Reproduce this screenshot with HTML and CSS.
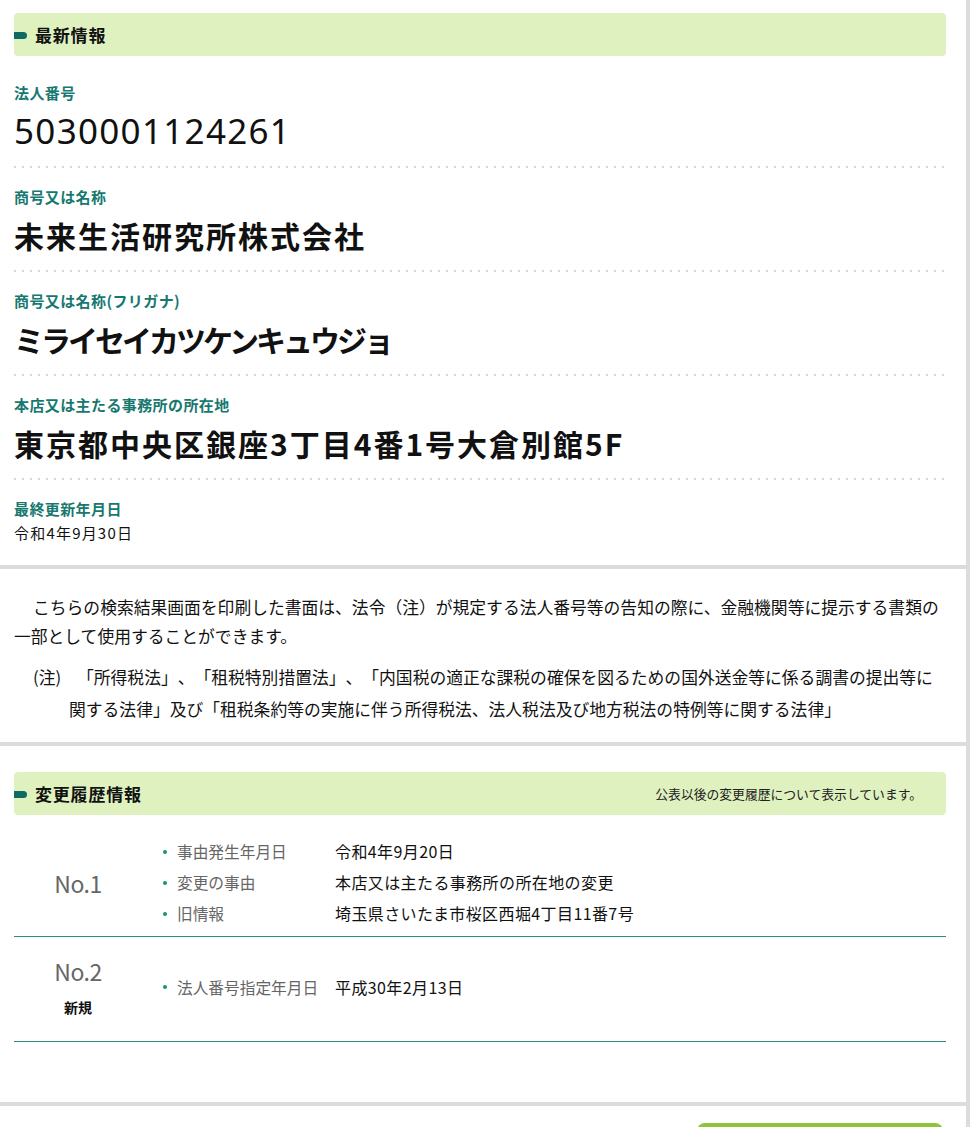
FILE: index.html
```html
<!DOCTYPE html>
<html lang="ja">
<head>
<meta charset="utf-8">
<title>法人番号公表サイト</title>
<link rel="stylesheet" href="styles.css">
</head>
<body>
<div class="page">
  <section class="panel latest">
    <h2 class="bar"><span class="bar-title">最新情報</span></h2>
    <dl class="fields">
      <div class="field">
        <dt>法人番号</dt>
        <dd class="num">5030001124261</dd>
      </div>
      <div class="field">
        <dt>商号又は名称</dt>
        <dd class="big">未来生活研究所株式会社</dd>
      </div>
      <div class="field">
        <dt>商号又は名称(フリガナ)</dt>
        <dd class="big kana">ミライセイカツケンキュウジョ</dd>
      </div>
      <div class="field">
        <dt>本店又は主たる事務所の所在地</dt>
        <dd class="big addr">東京都中央区銀座3丁目4番1号大倉別館5F</dd>
      </div>
      <div class="field last">
        <dt>最終更新年月日</dt>
        <dd class="small">令和4年9月30日</dd>
      </div>
    </dl>
  </section>

  <section class="panel notice">
    <p class="lead">こちらの検索結果画面を印刷した書面は、法令（注）が規定する法人番号等の告知の際に、金融機関等に提示する書類の一部として使用することができます。</p>
    <div class="note">
      <span class="note-mark">(注)</span>
      <p class="note-text">「所得税法」、「租税特別措置法」、「内国税の適正な課税の確保を図るための国外送金等に係る調書の提出等に関する法律」及び「租税条約等の実施に伴う所得税法、法人税法及び地方税法の特例等に関する法律」</p>
    </div>
  </section>

  <section class="panel history">
    <h2 class="bar"><span class="bar-title">変更履歴情報</span><span class="bar-note">公表以後の変更履歴について表示しています。</span></h2>
    <div class="entry first">
      <div class="entry-no"><span class="no">No.1</span></div>
      <dl class="rows">
        <div class="row"><dt>事由発生年月日</dt><dd>令和4年9月20日</dd></div>
        <div class="row"><dt>変更の事由</dt><dd>本店又は主たる事務所の所在地の変更</dd></div>
        <div class="row"><dt>旧情報</dt><dd>埼玉県さいたま市桜区西堀4丁目11番7号</dd></div>
      </dl>
    </div>
    <div class="entry second">
      <div class="entry-no"><span class="no">No.2</span><span class="kind">新規</span></div>
      <dl class="rows">
        <div class="row"><dt>法人番号指定年月日</dt><dd>平成30年2月13日</dd></div>
      </dl>
    </div>
  </section>

  <section class="panel footer">
    <div class="btn"></div>
  </section>
</div>
</body>
</html>
```

FILE: styles.css
```css
html, body {
  margin: 0;
  padding: 0;
}
body {
  background: #dcdcdc;
  font-family: "Noto Sans CJK JP", "Noto Sans", sans-serif;
  color: #111;
}
.page {
  width: 966px;
  display: flex;
  flex-direction: column;
  gap: 4px;
}
.panel {
  background: #fff;
  padding: 0 20px 0 14px;
}
dl, dd, dt, p, h2 {
  margin: 0;
}

/* section header bar */
.bar {
  height: 43px;
  background: #dff1bf;
  border-radius: 4px;
  display: flex;
  align-items: center;
  justify-content: space-between;
  position: relative;
  padding: 0 24px 0 21px;
}
.bar::before {
  content: "";
  position: absolute;
  left: 0;
  top: 50%;
  margin-top: -3px;
  width: 13px;
  height: 7px;
  background: #0e6b62;
  border-radius: 0 3.5px 3.5px 0;
}
.bar-title {
  font-size: 17px;
  font-weight: bold;
  color: #111;
  letter-spacing: 0.8px;
}
.bar-note {
  font-size: 12.8px;
  font-weight: normal;
  color: #222;
}

/* latest info */
.latest {
  padding-top: 13px;
}
.fields {
  padding-top: 27px;
}
.field {
  padding: 19px 0 17px;
  background-image: repeating-linear-gradient(to right, #d6d6d6 0, #d6d6d6 2px, transparent 2px, transparent 8px);
  background-size: 100% 2px;
  background-repeat: no-repeat;
  background-position: left bottom;
}
.field:first-child {
  padding-top: 0;
}
.field dt {
  font-size: 15px;
  line-height: 20px;
  font-weight: bold;
  color: #17786f;
  letter-spacing: 0.4px;
}
.field dd {
  margin-top: 8px;
  line-height: 40px;
}
.field .num {
  font-family: "Noto Sans", "Noto Sans CJK JP", sans-serif;
  font-size: 35px;
  font-weight: normal;
  letter-spacing: 1.3px;
}
.field .big {
  font-size: 30px;
  font-weight: bold;
  letter-spacing: 2px;
}
.field .kana {
  letter-spacing: -3px;
}
.field .addr {
  letter-spacing: 2px;
}
.field.last {
  background-image: none;
  padding-bottom: 22px;
}
.field.last dd {
  margin-top: 4px;
  line-height: 20px;
  font-size: 15px;
  letter-spacing: 1.2px;
}

/* notice */
.notice {
  padding-top: 24px;
  padding-bottom: 17px;
}
.lead {
  font-size: 16.8px;
  line-height: 29px;
  text-indent: 19px;
}
.note {
  display: flex;
  margin-top: 10px;
  font-size: 16.8px;
  line-height: 32px;
  text-spacing-trim: space-all;
}
.note-mark {
  width: 36px;
  margin-left: 19px;
  flex: none;
}
.note-text {
  text-indent: 8px;
  text-spacing-trim: space-all;
}

/* history */
.history {
  padding-top: 26px;
  padding-bottom: 60px;
}
.entry {
  display: flex;
  border-bottom: 1px solid #2d8d7d;
}
.entry.first {
  padding: 21px 0 7px;
}
.entry.second {
  padding: 19px 0 23px;
  align-items: center;
}
.entry-no {
  width: 128px;
  flex: none;
  display: flex;
  flex-direction: column;
  align-items: center;
  justify-content: center;
}
.no {
  font-size: 23px;
  line-height: 30px;
  color: #666;
  letter-spacing: -0.5px;
}
.kind {
  margin-top: 10px;
  font-size: 14px;
  line-height: 22px;
  font-weight: bold;
  color: #111;
}
.rows {
  padding-left: 18px;
}
.row {
  display: flex;
  line-height: 31px;
  font-size: 15.7px;
}
.row dt {
  width: 175px;
  flex: none;
  padding-left: 17px;
  box-sizing: border-box;
  color: #666;
  position: relative;
}
.row dt::before {
  content: "";
  position: absolute;
  left: 3px;
  top: 50%;
  width: 4px;
  height: 4px;
  margin-top: -2px;
  border-radius: 50%;
  background: #1f8f78;
}
.row dd {
  color: #111;
  font-size: 16px;
  letter-spacing: 0.4px;
}

/* footer */
.footer {
  padding-top: 17px;
  height: 40px;
  display: flex;
  justify-content: flex-end;
}
.btn {
  width: 246px;
  height: 40px;
  margin-right: 3px;
  background: #8cc43c;
  border-radius: 8px;
}
```
